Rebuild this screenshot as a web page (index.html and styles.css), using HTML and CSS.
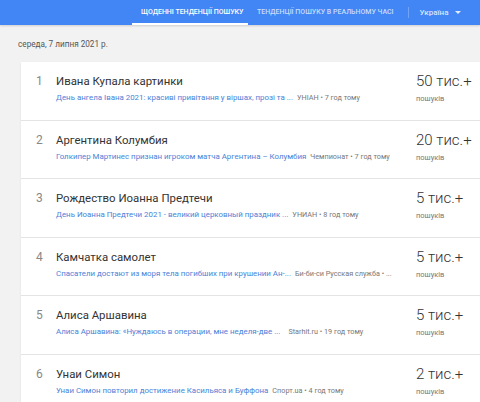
FILE: index.html
```html
<!DOCTYPE html>
<html lang="uk">
<head>
<meta charset="utf-8">
<link rel="stylesheet" href="styles.css">
</head>
<body>
<header class="topbar">
  <nav class="tabs">
    <a class="tab active">Щоденні тенденції пошуку</a>
    <a class="tab">Тенденції пошуку в реальному часі</a>
    <span class="divider"></span>
    <a class="country">Україна <span class="caret"></span></a>
  </nav>
</header>
<main class="content">
  <div class="date">середа, 7 липня 2021 р.</div>
  <section class="card">
    <div class="row">
      <div class="num">1</div>
      <div class="main">
        <div class="title">Ивана Купала картинки</div>
        <div class="sub"><span class="link">День ангела Івана 2021: красиві привітання у віршах, прозі та ...</span><span class="src">УНІАН • 7 год тому</span></div>
      </div>
      <div class="count"><div class="big">50 тис.+</div><div class="small">пошуків</div></div>
    </div>
    <div class="row">
      <div class="num">2</div>
      <div class="main">
        <div class="title">Аргентина Колумбия</div>
        <div class="sub"><span class="link">Голкипер Мартинес признан игроком матча Аргентина – Колумбия</span><span class="src">Чемпионат • 7 год тому</span></div>
      </div>
      <div class="count"><div class="big">20 тис.+</div><div class="small">пошуків</div></div>
    </div>
    <div class="row">
      <div class="num">3</div>
      <div class="main">
        <div class="title">Рождество Иоанна Предтечи</div>
        <div class="sub"><span class="link">День Иоанна Предтечи 2021 - великий церковный праздник ...</span><span class="src">УНИАН • 8 год тому</span></div>
      </div>
      <div class="count"><div class="big">5 тис.+</div><div class="small">пошуків</div></div>
    </div>
    <div class="row">
      <div class="num">4</div>
      <div class="main">
        <div class="title">Камчатка самолет</div>
        <div class="sub"><span class="link">Спасатели достают из моря тела погибших при крушении Ан-...</span><span class="src">Би-би-си Русская служба • ...</span></div>
      </div>
      <div class="count"><div class="big">5 тис.+</div><div class="small">пошуків</div></div>
    </div>
    <div class="row">
      <div class="num">5</div>
      <div class="main">
        <div class="title">Алиса Аршавина</div>
        <div class="sub"><span class="link">Алиса Аршавина: «Нуждаюсь в операции, мне неделя-две ...</span><span class="src wide">Starhit.ru • 19 год тому</span></div>
      </div>
      <div class="count"><div class="big">5 тис.+</div><div class="small">пошуків</div></div>
    </div>
    <div class="row">
      <div class="num">6</div>
      <div class="main">
        <div class="title">Унаи Симон</div>
        <div class="sub"><span class="link">Унаи Симон повторил достижение Касильяса и Буффона</span><span class="src">Спорт.ua • 4 год тому</span></div>
      </div>
      <div class="count"><div class="big">2 тис.+</div><div class="small">пошуків</div></div>
    </div>
  </section>
</main>
</body>
</html>
```

FILE: styles.css
```css
* { box-sizing: border-box; }
html, body {
  margin: 0;
  padding: 0;
  background: #f2f2f2;
  font-family: Roboto, "Noto Sans", Arial, sans-serif;
  overflow: hidden;
}
.topbar {
  height: 25px;
  background: #4285f4;
  box-shadow: 0 1px 2px rgba(0,0,0,0.15);
}
.tabs {
  display: flex;
  align-items: stretch;
  height: 25px;
  padding-left: 132px;
}
.tab {
  display: flex;
  align-items: center;
  padding: 1px 0 0 9px;
  font-size: 7px;
  font-weight: 500;
  text-transform: uppercase;
  color: rgba(255,255,255,0.72);
  white-space: nowrap;
  border-bottom: 2px solid transparent;
}
.tab.active {
  color: #fff;
  border-bottom-color: #fff;
  width: 116px;
}
.divider {
  width: 1px;
  background: rgba(255,255,255,0.25);
  margin: 7px 0 7px 14px;
}
.country {
  display: flex;
  align-items: center;
  gap: 7px;
  padding-left: 11px;
  font-size: 8px;
  font-weight: 500;
  color: rgba(255,255,255,0.8);
}
.caret {
  width: 0;
  height: 0;
  border-left: 3px solid transparent;
  border-right: 3px solid transparent;
  border-top: 3.5px solid rgba(255,255,255,0.85);
}
.content {
  padding: 14px 0 0 21px;
}
.date {
  font-size: 8.2px;
  color: #555;
  height: 23px;
  margin-left: -3px;
}
.card {
  background: #fff;
  width: 470px;
  box-shadow: 0 1px 2px rgba(0,0,0,0.08);
}
.row {
  display: flex;
  height: 58.6px;
  border-bottom: 1px solid #e4e4e4;
  padding-top: 12px;
}
.num {
  width: 35px;
  padding-left: 15px;
  font-size: 12px;
  color: #888;
  line-height: 15px;
}
.main {
  width: 360px;
  flex: none;
}
.title {
  font-size: 11.4px;
  color: #333;
  line-height: 15px;
  height: 19px;
}
.sub {
  font-size: 7.9px;
  line-height: 10px;
  white-space: nowrap;
}
.link { color: #4a82d8; }
.src { color: #777; margin-left: 4px; font-size: 7.25px; }
.src.wide { margin-left: 8px; }
.count {
  flex: none;
}
.big {
  font-size: 15px;
  font-weight: 300;
  color: #333;
  line-height: 17px;
  height: 21px;
  margin-top: -1px;
}
.small {
  font-size: 7.5px;
  color: #777;
  line-height: 10px;
}
```
